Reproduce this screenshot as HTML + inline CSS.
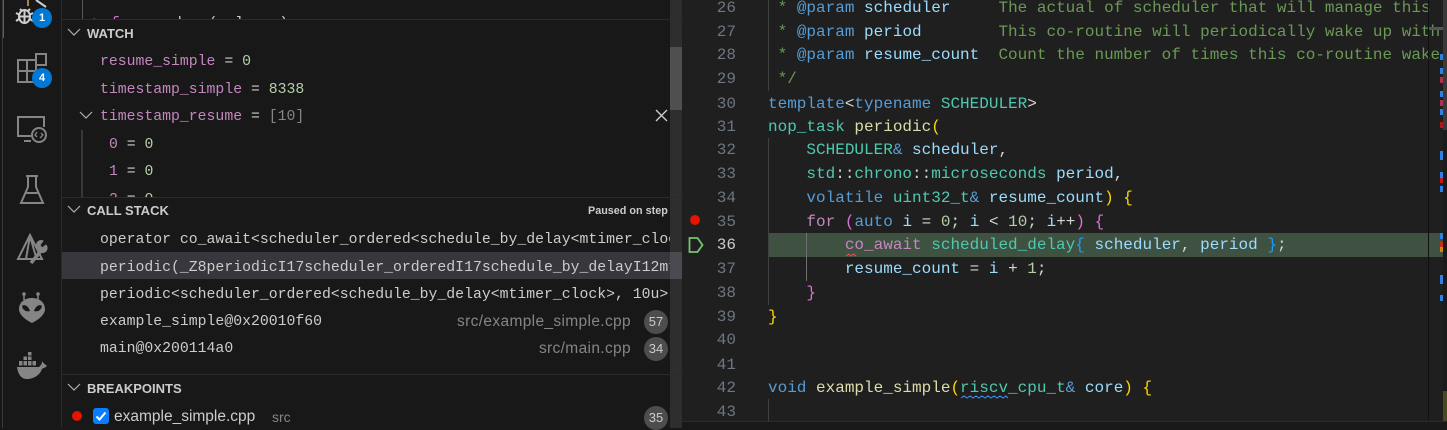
<!DOCTYPE html>
<html><head><meta charset="utf-8">
<style>
html,body{margin:0;padding:0;width:1447px;height:428px;overflow:hidden;background:#181818}
.a{position:absolute}
.m,.s,.c{position:absolute;white-space:pre}
.m{font:14.8px/20px "Liberation Mono",monospace;color:#cccccc;margin-top:1px}
.s{font:15.5px/20px "Liberation Sans",sans-serif;letter-spacing:.35px;color:#858585}
.h{position:absolute;left:87px;font:bold 13px/16px "Liberation Sans",sans-serif;color:#cccccc}
.c{left:768px;font:16px/24px "Liberation Mono",monospace;color:#cccccc;margin-top:1px}
.n{position:absolute;left:700px;width:36px;text-align:right;font:16px/24px "Liberation Mono",monospace;color:#6e7681;margin-top:1px}
.badge{position:absolute;left:644px;width:24px;height:24px;border-radius:12px;background:#4d4d4d;color:#cccccc;font:13px/24px "Liberation Sans",sans-serif;text-align:center}
.v{color:#c586c0}.g{color:#b5cea8}.y{color:#858585}
.cm{color:#6a9955}.k{color:#569cd6}.t{color:#4ec9b0}.p{color:#9cdcfe}.f{color:#dcdcaa}.o{color:#ffd700}.q{color:#da70d6}.b{color:#179fff}.r{color:#c586c0}.w{color:#d4d4d4}.u{color:#b5cea8}
.mk{position:absolute;left:1440px;width:3px}
</style></head>
<body>
<!-- activity bar -->
<div class="a" style="left:0;top:0;width:61px;height:428px;background:#181818"></div>
<div class="a" style="left:2px;top:0;width:1px;height:428px;background:#3a3a3a"></div>
<div class="a" style="left:3px;top:0;width:1px;height:38px;background:#0078d4"></div>
<div class="a" style="left:61px;top:0;width:1px;height:428px;background:#2b2b2b"></div>
<svg class="a" style="left:0;top:0" width="62" height="428" viewBox="0 0 62 428" fill="none" stroke="#858585" stroke-width="2">
  <path d="M28 0V6" stroke="#d9a75a" stroke-width="1.5"/>
  <path d="M36 0L46 7" stroke="#cfcfcf"/>
  <g stroke="#d0d0d0" stroke-width="2"><ellipse cx="24.5" cy="16.5" rx="5.5" ry="6.5"/><path d="M19 16.500H30M24.500 10V23M20 9L22 11M30 9L28 11M16 13L19 14.500M33 13L30 14.500M16 21L19 19M33 21L30 19"/></g>
  <path d="M18 60H36V82H18ZM18 71H36M27 60V82" stroke-width="2"/>
  <rect x="36" y="54" width="10" height="11"/>
  <path d="M44 127V117H18V136H31M24 141H31"/>
  <circle cx="39" cy="135" r="7"/>
  <path d="M37 132L35 135L37 137M41 133L43 135L40 138" stroke-width="1.300"/>
  <path d="M26 176H38M28 176V187L21 203H43L36 187V176M25 193H39" stroke-width="2"/>
  <path d="M30 235L18 259H42ZM30 236L26 259M30 236L36 257" stroke-width="2"/>
  <path d="M31 263L40 252" stroke-width="3.500" stroke="#858585"/>
  <path d="M39 251A4.500 4.500 0 1 0 46 245L42 248L40 245L43 241A4.500 4.500 0 0 0 37 247" fill="#858585" stroke-width="1"/>
  <path d="M24 300V293M38 300V293" stroke-width="1.500"/>
  <circle cx="24" cy="294" r="1.800" fill="#858585" stroke="none"/><circle cx="38" cy="294" r="1.800" fill="#858585" stroke="none"/>
  <path fill-rule="evenodd" d="M32 298C40 298 45 303 45 309C45 315 38 320 32 323C26 320 19 315 19 309C19 303 24 298 32 298ZM22 306C24 304 28 305 30 311C27 312 23 311 22 306ZM42 306C40 304 36 305 34 311C37 312 41 311 42 306Z" fill="#858585" stroke="none"/>
  <path d="M17 367H39C41 365 42 364 42 361C43 363 46 365 47 366C45 368 43 368 42 369C40 375 34 379 27 379C21 379 18 374 17 367Z" fill="#858585" stroke="none"/>
  <g fill="#858585" stroke="none"><rect x="19" y="361" width="3.500" height="4.500"/><rect x="23.500" y="361" width="3.500" height="4.500"/><rect x="28" y="361" width="3.500" height="4.500"/><rect x="32.500" y="361" width="3.500" height="4.500"/><rect x="23.500" y="356.500" width="3.500" height="3.500"/><rect x="28" y="356.500" width="3.500" height="3.500"/><rect x="28" y="352" width="3.500" height="3.500"/></g>
</svg>
<div class="a" style="left:32px;top:8px;width:20px;height:20px;border-radius:10px;background:#0078d4;color:#fff;font:bold 11px/20px 'Liberation Sans',sans-serif;text-align:center">1</div>
<div class="a" style="left:32px;top:68px;width:20px;height:20px;border-radius:10px;background:#0078d4;color:#fff;font:bold 11px/20px 'Liberation Sans',sans-serif;text-align:center">4</div>

<!-- sidebar -->
<div class="a" style="left:62px;top:0;width:620px;height:428px;background:#181818;overflow:hidden">
  <div class="a" style="left:20px;top:0;width:1px;height:19px;background:#585858"></div>
  <div class="m" style="left:31px;top:13px;height:5px;overflow:hidden;color:#cccccc;line-height:20px">&gt; <span class="q">f</span>      d   (  l    )</div>
</div>
<div class="a" style="left:670px;top:0;width:12px;height:428px;background:#2e2e2e"></div>
<div class="a" style="left:670px;top:47px;width:12px;height:63px;background:#4f4f4f"></div>
<div class="a" style="left:62px;top:19px;width:620px;height:1px;background:#2b2b2b"></div>
<div class="a" style="left:62px;top:197px;width:620px;height:1px;background:#2b2b2b"></div>
<div class="a" style="left:62px;top:374px;width:620px;height:1px;background:#2b2b2b"></div>

<svg class="a" style="left:62px;top:0" width="40" height="428" fill="none" stroke="#b0b0b0" stroke-width="1.200">
  <path d="M6 29L12 35L18 29M6 206L12 212L18 206M6 384L12 390L18 384"/>
  <path d="M18 112L24 118L30 112"/>
  <path d="M20 130V197" stroke="#585858" stroke-width="1"/>
</svg>
<div class="h" style="top:26px">WATCH</div>
<div class="h" style="top:203px">CALL STACK</div>
<div class="h" style="top:381px">BREAKPOINTS</div>
<div class="a" style="left:588px;top:204px;font:bold 10.8px/14px 'Liberation Sans',sans-serif;color:#cccccc;white-space:pre">Paused on step</div>

<div class="m" style="left:100px;top:51px"><span class="v">resume_simple</span> = <span class="g">0</span></div>
<div class="m" style="left:100px;top:79px"><span class="v">timestamp_simple</span> = <span class="g">8338</span></div>
<div class="m" style="left:100px;top:106px"><span class="v">timestamp_resume</span> = <span class="y">[10]</span></div>
<div class="m" style="left:109px;top:134px"><span class="v">0</span> = <span class="g">0</span></div>
<div class="m" style="left:109px;top:161px"><span class="v">1</span> = <span class="g">0</span></div>
<div class="a" style="left:62px;top:190px;width:600px;height:7px;overflow:hidden"><div class="m" style="left:47px;top:-1px"><span class="v">2</span> = <span class="g">0</span></div></div>
<svg class="a" style="left:654px;top:108px" width="15" height="15" fill="none" stroke="#d0d0d0" stroke-width="1.300"><path d="M2 2L13 13M13 2L2 13"/></svg>

<div class="a" style="left:62px;top:252px;width:620px;height:27px;background:#37373d"></div>
<div class="a" style="left:670px;top:252px;width:12px;height:27px;background:#4a4a50"></div>
<div class="a" style="left:100px;top:225px;width:570px;height:110px;overflow:hidden">
  <div class="m" style="left:0;top:4px">operator co_await&lt;scheduler_ordered&lt;schedule_by_delay&lt;mtimer_clock&gt;</div>
  <div class="m" style="left:0;top:32px">periodic(_Z8periodicI17scheduler_orderedI17schedule_by_delayI12mtimer</div>
  <div class="m" style="left:0;top:59px">periodic&lt;scheduler_ordered&lt;schedule_by_delay&lt;mtimer_clock&gt;, 10u&gt;</div>
  <div class="m" style="left:0;top:86px">example_simple@0x20010f60</div>
</div>
<div class="m" style="left:100px;top:338px">main@0x200114a0</div>
<div class="s" style="left:431px;top:312px;width:200px;text-align:right">src/example_simple.cpp</div>
<div class="s" style="left:431px;top:339px;width:200px;text-align:right">src/main.cpp</div>
<div class="badge" style="top:310px">57</div>
<div class="badge" style="top:337px">34</div>
<div class="badge" style="top:406px">35</div>

<div class="a" style="left:72px;top:411px;width:10px;height:10px;border-radius:5px;background:#e51400"></div>
<svg class="a" style="left:93px;top:408px" width="16" height="16"><rect width="16" height="16" rx="3" fill="#0a7cff"/><path d="M3.500 8.500L6.500 11.500L12.500 4.500" fill="none" stroke="#fff" stroke-width="2"/></svg>
<div class="a" style="left:114px;top:407px;font:15.5px/20px 'Liberation Sans',sans-serif;color:#cccccc;white-space:pre">example_simple.cpp</div>
<div class="a" style="left:272px;top:407px;font:14px/20px 'Liberation Sans',sans-serif;color:#858585;white-space:pre">src</div>

<!-- editor -->
<div class="a" style="left:682px;top:0;width:765px;height:422px;background:#1f1f1f"></div>
<div class="a" style="left:682px;top:422px;width:765px;height:6px;background:#181818"></div>
<div class="a" style="left:682px;top:421px;width:765px;height:1px;background:#2b2b2b"></div>
<div class="a" style="left:768px;top:233px;width:673px;height:24px;background:#3f5140"></div>
<div class="a" style="left:768px;top:0;width:1px;height:91px;background:#404040"></div>
<div class="a" style="left:768px;top:138px;width:1px;height:167px;background:#404040"></div>
<div class="a" style="left:768px;top:399px;width:1px;height:22px;background:#404040"></div>
<div class="a" style="left:806px;top:233px;width:1px;height:48px;background:#707070"></div>

<div class="n" style="top:-5px">26</div>
<div class="n" style="top:19px">27</div>
<div class="n" style="top:42px">28</div>
<div class="n" style="top:66px">29</div>
<div class="n" style="top:91px">30</div>
<div class="n" style="top:114px">31</div>
<div class="n" style="top:137px">32</div>
<div class="n" style="top:161px">33</div>
<div class="n" style="top:185px">34</div>
<div class="n" style="top:209px">35</div>
<div class="n" style="top:232px;color:#cccccc">36</div>
<div class="n" style="top:256px">37</div>
<div class="n" style="top:280px">38</div>
<div class="n" style="top:304px">39</div>
<div class="n" style="top:327px">40</div>
<div class="n" style="top:352px">41</div>
<div class="n" style="top:375px">42</div>
<div class="n" style="top:399px">43</div>

<div class="a" style="left:690px;top:215px;width:10px;height:10px;border-radius:5px;background:#e51400"></div>
<svg class="a" style="left:688px;top:236px" width="16" height="18" fill="none"><path d="M1.500 2H9.500L14.500 9L9.500 16H1.500Z" stroke="#73c56e" stroke-width="1.800"/></svg>

<div class="a" style="left:0;top:0;width:1441px;height:421px;overflow:hidden">
<div class="c" style="top:-5px"><span class="cm"> * </span><span class="k">@param</span> <span class="p">scheduler</span>     <span class="cm">The actual of scheduler that will manage this co-routine</span></div>
<div class="c" style="top:19px"><span class="cm"> * </span><span class="k">@param</span> <span class="p">period</span>        <span class="cm">This co-routine will periodically wake up with a period</span></div>
<div class="c" style="top:42px"><span class="cm"> * </span><span class="k">@param</span> <span class="p">resume_count</span>  <span class="cm">Count the number of times this co-routine wakes up</span></div>
<div class="c" style="top:66px"><span class="cm"> */</span></div>
<div class="c" style="top:91px"><span class="k">template</span><span class="w">&lt;</span><span class="k">typename</span> <span class="t">SCHEDULER</span><span class="w">&gt;</span></div>
<div class="c" style="top:114px"><span class="t">nop_task</span> <span class="f">periodic</span><span class="o">(</span></div>
<div class="c" style="top:137px">    <span class="t">SCHEDULER</span><span class="k">&amp;</span> <span class="p">scheduler</span><span class="w">,</span></div>
<div class="c" style="top:161px">    <span class="t">std</span><span class="w">::</span><span class="t">chrono</span><span class="w">::</span><span class="t">microseconds</span> <span class="p">period</span><span class="w">,</span></div>
<div class="c" style="top:185px">    <span class="k">volatile</span> <span class="t">uint32_t</span><span class="k">&amp;</span> <span class="p">resume_count</span><span class="o">)</span> <span class="o">{</span></div>
<div class="c" style="top:209px">    <span class="r">for</span> <span class="q">(</span><span class="k">auto</span> <span class="p">i</span> <span class="w">=</span> <span class="u">0</span><span class="w">;</span> <span class="p">i</span> <span class="w">&lt;</span> <span class="u">10</span><span class="w">;</span> <span class="p">i</span><span class="w">++</span><span class="q">)</span> <span class="q">{</span></div>
<div class="c" style="top:232px">        <span class="r">co_await</span> <span class="t">scheduled_delay</span><span class="b">{</span> <span class="p">scheduler</span><span class="w">,</span> <span class="p">period</span> <span class="b">}</span><span class="w">;</span></div>
<div class="c" style="top:256px">        <span class="p">resume_count</span> <span class="w">=</span> <span class="p">i</span> <span class="w">+</span> <span class="u">1</span><span class="w">;</span></div>
<div class="c" style="top:280px">    <span class="q">}</span></div>
<div class="c" style="top:304px"><span class="o">}</span></div>
<div class="c" style="top:375px"><span class="k">void</span> <span class="f">example_simple</span><span class="o">(</span><span class="t">riscv_cpu_t</span><span class="k">&amp;</span> <span class="p">core</span><span class="o">)</span> <span class="o">{</span></div>
</div>
<svg class="a" style="left:845px;top:253px" width="12" height="5" fill="none" stroke="#f14c4c"><path d="M1 3L3.500 1L6 3L8.500 1L11 3"/></svg>
<svg class="a" style="left:960px;top:395px" width="50" height="5" fill="none" stroke="#3794ff"><path d="M1 3L4 1L7 3L10 1L13 3L16 1L19 3L22 1L25 3L28 1L31 3L34 1L37 3L40 1L43 3L46 1L48 3"/></svg>

<!-- ruler -->
<div class="a" style="left:1428px;top:0;width:1px;height:421px;background:#111111"></div>
<div class="a" style="left:1443px;top:0;width:4px;height:421px;background:#1b1b1b"></div>
<div class="a" style="left:1443px;top:0;width:4px;height:130px;background:#3a3a3a"></div>
<div class="a" style="left:1443px;top:391px;width:4px;height:30px;background:#4a4a20"></div>
<div class="a" style="left:1429px;top:233px;width:14px;height:24px;background:#3f5140"></div>
<div class="a" style="left:1429px;top:27px;width:14px;height:3px;background:#555"></div>
<div class="mk" style="top:54px;height:6px;background:#2f80e4"></div>
<div class="mk" style="top:68px;height:6px;background:#2f80e4"></div>
<div class="mk" style="top:77px;height:6px;background:#b03050"></div>
<div class="mk" style="top:91px;height:6px;background:#2f80e4"></div>
<div class="mk" style="top:100px;height:6px;background:#b03050"></div>
<div class="mk" style="top:109px;height:6px;background:#2f80e4"></div>
<div class="mk" style="top:122px;height:6px;background:#b01818"></div>
<div class="mk" style="top:151px;height:9px;background:#2f80e4"></div>
<div class="mk" style="top:172px;height:6px;background:#2f80e4"></div>
<div class="mk" style="top:178px;height:5px;background:#c01818"></div>
<div class="mk" style="top:186px;height:6px;background:#2f80e4"></div>
<div class="mk" style="top:233px;height:6px;background:#2f80e4"></div>
<div class="mk" style="top:242px;height:5px;background:#d02818"></div>
<div class="mk" style="top:247px;height:5px;background:#d08a00"></div>
<div class="mk" style="top:275px;height:9px;background:#2f80e4"></div>
<div class="mk" style="top:295px;height:6px;background:#2f80e4"></div>
</body></html>
